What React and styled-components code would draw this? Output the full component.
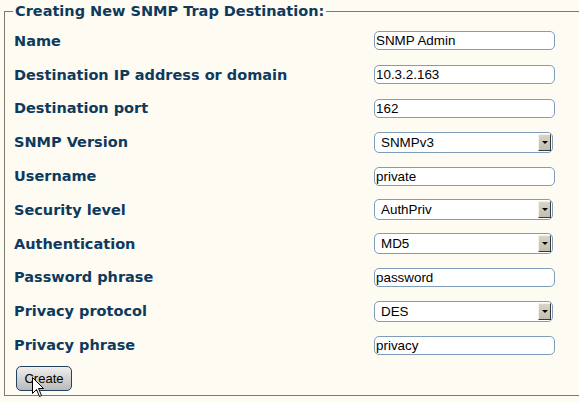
import React from "react";
import styled, { createGlobalStyle } from "styled-components";

const GlobalStyle = createGlobalStyle`
  html, body {
    margin: 0;
    padding: 0;
    background: #fefbf2;
    overflow: hidden;
  }
`;

const Page = styled.div`
  width: 579px;
  height: 402px;
  padding: 2px 0 0 4px;
  box-sizing: border-box;
  background: #fefbf2;
  overflow: hidden;
`;

const Fieldset = styled.fieldset`
  width: 575px;
  margin: 0;
  padding: 0 0 4px 8px;
  border: 1px solid #7e7b6a;
  border-right: none;
  box-sizing: border-box;
  min-width: 0;
`;

const Legend = styled.legend`
  padding: 0 2px;
  font-family: "DejaVu Sans", Verdana, sans-serif;
  font-weight: bold;
  font-size: 14.5px;
  line-height: 18px;
  color: #0e3a5d;
`;

const FormGrid = styled.div`
  display: grid;
  grid-template-columns: 360px 182px;
  grid-auto-rows: 33.8px;
  align-items: center;
  margin-top: 4px;
  padding-left: 1px;
`;

const Label = styled.label`
  font-family: "DejaVu Sans", Verdana, sans-serif;
  font-weight: bold;
  font-size: 14.5px;
  color: #0e3a5d;
  white-space: nowrap;
`;

const TextInput = styled.input`
  width: 181px;
  height: 19px;
  box-sizing: border-box;
  border: 1px solid #7f9db9;
  border-radius: 5px;
  background: #ffffff;
  padding: 0 0 0 1px;
  font-family: "Liberation Sans", Arial, sans-serif;
  font-size: 13.4px;
  color: #000;
  outline: none;
`;

const SelectBox = styled.div`
  position: relative;
  width: 179px;
  height: 21px;
`;

const Select = styled.select`
  appearance: none;
  -webkit-appearance: none;
  width: 100%;
  height: 100%;
  box-sizing: border-box;
  border: 1px solid #7f9db9;
  border-radius: 5px;
  background: #ffffff;
  padding: 0 0 0 6px;
  font-family: "Liberation Sans", Arial, sans-serif;
  font-size: 13.4px;
  color: #000;
  outline: none;
`;

const ArrowButton = styled.span`
  position: absolute;
  top: 2px;
  right: 2px;
  width: 13px;
  height: 17px;
  box-sizing: border-box;
  background: linear-gradient(#d8d4c6, #c3bfae);
  border-top: 1px solid #f4f2ea;
  border-left: 1px solid #f4f2ea;
  border-right: 1px solid #3a3a3a;
  border-bottom: 1px solid #3a3a3a;
  display: flex;
  align-items: center;
  justify-content: center;
  pointer-events: none;

  &::after {
    content: "";
    border-left: 3px solid transparent;
    border-right: 3px solid transparent;
    border-top: 3px solid #000;
  }
`;

const ButtonRow = styled.div`
  position: relative;
  padding: 4px 0 0 3px;
`;

const Button = styled.button`
  width: 56px;
  height: 25px;
  border: 1px solid #23425f;
  border-radius: 5px;
  background: linear-gradient(#eeeeee, #d4d4d4 50%, #b9b9b9);
  font-family: "Liberation Sans", Arial, sans-serif;
  font-size: 13px;
  color: #000;
  padding: 0;
`;

const Cursor = styled.svg`
  position: absolute;
  left: 19px;
  top: 15px;
`;

const fields = [
  { label: "Name", type: "text", value: "SNMP Admin" },
  { label: "Destination IP address or domain", type: "text", value: "10.3.2.163" },
  { label: "Destination port", type: "text", value: "162" },
  { label: "SNMP Version", type: "select", value: "SNMPv3" },
  { label: "Username", type: "text", value: "private" },
  { label: "Security level", type: "select", value: "AuthPriv" },
  { label: "Authentication", type: "select", value: "MD5" },
  { label: "Password phrase", type: "text", value: "password" },
  { label: "Privacy protocol", type: "select", value: "DES" },
  { label: "Privacy phrase", type: "text", value: "privacy" },
];

const App = () => {
  return (
    <Page>
      <GlobalStyle />
      <Fieldset>
        <Legend>Creating New SNMP Trap Destination:</Legend>
        <FormGrid>
          {fields.map((f) => (
            <React.Fragment key={f.label}>
              <Label>{f.label}</Label>
              {f.type === "text" ? (
                <TextInput defaultValue={f.value} />
              ) : (
                <SelectBox>
                  <Select defaultValue={f.value}>
                    <option>{f.value}</option>
                  </Select>
                  <ArrowButton />
                </SelectBox>
              )}
            </React.Fragment>
          ))}
        </FormGrid>
        <ButtonRow>
          <Button>Create</Button>
          <Cursor width="13" height="21" viewBox="0 0 13 21">
            <path
              d="M0.5 0.5 L0.5 16.5 L4.5 12.5 L7.5 19.5 L9.5 18.5 L6.5 11.5 L11.5 11.5 Z"
              fill="#fff"
              stroke="#000"
              strokeWidth="1"
            />
          </Cursor>
        </ButtonRow>
      </Fieldset>
    </Page>
  );
};

export default App;
